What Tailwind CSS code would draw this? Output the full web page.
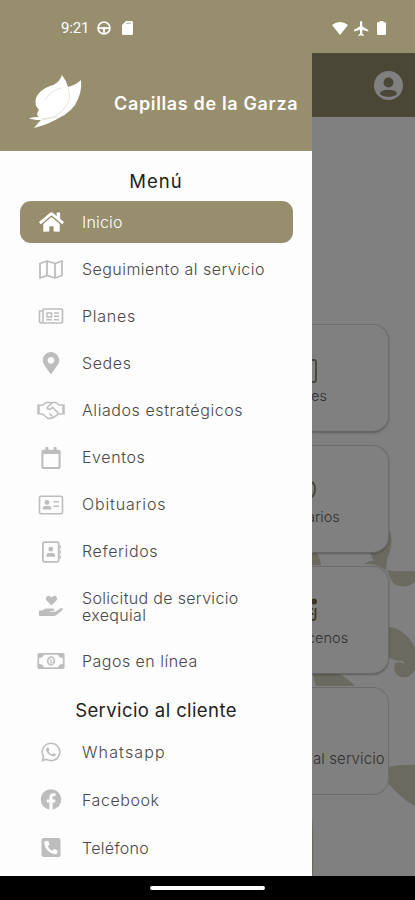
<!DOCTYPE html>
<html lang="es">
<head>
<meta charset="utf-8">
<meta name="viewport" content="width=device-width, initial-scale=1">
<title>Capillas de la Garza</title>
<script src="https://cdn.jsdelivr.net/npm/@tailwindcss/browser@4"></script>
</head>
<body class="bg-black">
<div class="flex h-[900px] w-[415px] flex-col overflow-hidden bg-black font-['Inter',sans-serif]">

  <!-- Status bar -->
  <header class="flex h-[53px] shrink-0 items-center bg-[#978e6d] pt-[3px] text-white">
    <span class="ml-[61px] w-[28px] whitespace-nowrap font-['Roboto',sans-serif] text-[15px] tracking-[-0.2px]">9:21</span>
    <svg class="ml-[8px] size-[14px]" viewBox="0 0 14 14" fill="none" stroke="currentColor" stroke-width="1.8"><circle cx="7" cy="7" r="5.9"/><path d="M1 7.200H13M7 7.200V12.500" stroke-width="1.700"/><path d="M4.500 7.500L7 5.500 9.500 7.500 7 9.500z" fill="currentColor" stroke="none"/></svg>
    <svg class="ml-[11px] h-[14px] w-[11px]" viewBox="0 0 11 14" fill="currentColor"><path d="M4 0h5.500A1.500 1.500 0 0 1 11 1.500v11A1.500 1.500 0 0 1 9.500 14h-8A1.500 1.500 0 0 1 0 12.500V4z"/><path d="M4 2.300h5" stroke="#978e6d" stroke-width=".7"/></svg>
    <svg class="ml-[199px] h-[13px] w-[16px]" viewBox="0 0 16 13" fill="currentColor"><path d="M0 3Q8-3 16 3L8 13z"/></svg>
    <svg class="ml-[6px] size-[15px]" viewBox="2 2 20 20" fill="currentColor"><path d="M21 16v-2l-8-5V3.500a1.500 1.500 0 0 0-3 0V9l-8 5v2l8-2.500V19l-2 1.500V22l3.500-1 3.500 1v-1.500L13 19v-5.500z"/></svg>
    <svg class="ml-[8px] h-[14px] w-[9px]" viewBox="0 0 9 14" fill="currentColor"><path d="M2.500 0h4v1.200H8a1 1 0 0 1 1 1V13a1 1 0 0 1-1 1H1a1 1 0 0 1-1-1V2.200a1 1 0 0 1 1-1h1.500z"/></svg>
  </header>

  <div class="flex h-[823px] shrink-0">
    <!-- Drawer -->
    <aside class="flex w-[312px] shrink-0 flex-col bg-[#fdfdfd]">
      <div class="flex h-[98px] shrink-0 items-center bg-[#978e6d] text-white">
        <svg class="ml-[28px] h-[54px] w-[54px]" viewBox="0 0 54 54"><path d="M34 0Q31 9 22 11Q11 15 8 23Q6 30 11 35Q7 40 11 42Q6 42 1 43Q4 45 13 45Q9 49 6 53Q21 49 29 44Q46 36 50 24Q54 15 53 5Q48 10 40 12Q38 5 34 0Z" fill="#fff"/><path d="M33 13Q22 16 17 25M40 13Q45 23 36 34Q32 39 23 43L14 45M30 42L13 44" fill="none" stroke="#ddd9cc" stroke-width=".7"/></svg>
        <h1 class="ml-[32px] whitespace-nowrap pt-[3px] text-[18px] font-semibold tracking-[0.65px]">Capillas de la Garza</h1>
      </div>

      <nav class="flex flex-col text-[16px] font-light leading-[17px] text-[#484848]">
        <h2 class="flex h-[50px] items-center justify-center pt-[10px] text-[18.500px] font-normal tracking-[1px] text-[#222]">Menú</h2>

        <a class="mr-[19px] ml-[20px] mb-[2.500px] flex h-[42px] items-center rounded-[11px] bg-[#978e6d] text-white">
          <svg class="ml-[19px] h-[22px] w-[25px]" viewBox="0 0 576 512" fill="currentColor"><path d="M280.370 148.260L96 300.110V464a16 16 0 0 0 16 16l112.060-.29a16 16 0 0 0 15.920-16V368a16 16 0 0 1 16-16h64a16 16 0 0 1 16 16v95.640a16 16 0 0 0 16 16.050L464 480a16 16 0 0 0 16-16V300L295.670 148.260a12.190 12.190 0 0 0-15.300 0zM571.600 251.470L488 182.560V44.050a12 12 0 0 0-12-12h-56a12 12 0 0 0-12 12v72.610L318.470 43a48 48 0 0 0-61 0L4.340 251.470a12 12 0 0 0-1.600 16.900l25.500 31A12 12 0 0 0 45.150 301l235.220-193.740a12.190 12.190 0 0 1 15.300 0L530.900 301a12 12 0 0 0 16.900-1.600l25.500-31a12 12 0 0 0-1.700-16.930z"/></svg>
          <span class="ml-[18px] tracking-[0.2px]">Inicio</span>
        </a>

        <a class="flex h-[47.100px] items-center pl-[38px]">
          <svg class="h-[21px] w-[26px] text-[#bdbdbd]" viewBox="0 0 26 21" fill="none" stroke="currentColor" stroke-width="1.800" stroke-linejoin="round"><path d="M2 4.500L9 2l8 2.500L24 2v14.500L17 19l-8-2.500L2 19zM9 2v14.500M17 4.500V19"/></svg>
          <span class="ml-[18px] tracking-[0.45px]">Seguimiento al servicio</span>
        </a>
        <a class="flex h-[47.100px] items-center pl-[38px]">
          <svg class="h-[18px] w-[26px] text-[#bdbdbd]" viewBox="0 0 26 18" fill="none" stroke="currentColor" stroke-width="1.600"><path d="M5 2h18.500a1 1 0 0 1 1 1v12a1 1 0 0 1-1 1H3.500a2 2 0 0 1-2-2V4H5M5 2v12a2 2 0 0 1-2 2"/><path d="M9 6h4.500v4H9zM16 6h5M16 9.300h5M8.200 12.700h5.800M16 12.700h5" stroke-width="1.500"/></svg>
          <span class="ml-[18px] tracking-[0.75px]">Planes</span>
        </a>
        <a class="flex h-[47.100px] items-center pl-[38px]">
          <svg class="h-[22px] w-[26px] text-[#bdbdbd]" viewBox="-114 0 612 512" fill="currentColor"><path d="M172.270 501.670C26.970 291.030 0 269.410 0 192 0 85.960 85.960 0 192 0s192 85.960 192 192c0 77.410-26.970 99.030-172.270 309.670-9.530 13.770-29.930 13.770-39.460 0zM192 272c44.180 0 80-35.820 80-80s-35.820-80-80-80-80 35.820-80 80 35.820 80 80 80z"/></svg>
          <span class="ml-[18px] tracking-[0.6px]">Sedes</span>
        </a>
        <a class="flex h-[47.400px] items-center pl-[37px]">
          <svg class="h-[19px] w-[28px] text-[#bdbdbd]" viewBox="0 0 28 19" fill="none" stroke="currentColor" stroke-width="1.600" stroke-linejoin="round" stroke-linecap="round"><path d="M1.500 3.500v10M26.500 3.500v10" stroke-width="2.500" stroke-linecap="butt"/><path d="M3 4h3l3-2.500h4l1.500 1L16 1.500h3L22 4h3M3 13h2.500l5 4q1.500 1 3 0 1.500.5 2.500-.8 1.500.2 2.200-1.200 1.800 0 2.300-2H25M14.500 2.500L10.500 6q-.5 2 1.500 2.500 1.500 0 3.500-2.200l5.500 5.500M13 13l2 2"/></svg>
          <span class="ml-[17px] pt-px tracking-[0.57px]">Aliados estratégicos</span>
        </a>
        <a class="flex h-[47.100px] items-center pl-[38px]">
          <svg class="h-[22px] w-[26px] text-[#bdbdbd]" viewBox="-78 0 604 512" fill="currentColor"><path d="M400 64h-48V12a12 12 0 0 0-12-12h-40a12 12 0 0 0-12 12v52H160V12a12 12 0 0 0-12-12h-40a12 12 0 0 0-12 12v52H48a48 48 0 0 0-48 48v352a48 48 0 0 0 48 48h352a48 48 0 0 0 48-48V112a48 48 0 0 0-48-48zm-6 400H54a6 6 0 0 1-6-6V160h352v298a6 6 0 0 1-6 6z"/></svg>
          <span class="ml-[18px] tracking-[0.600px]">Eventos</span>
        </a>
        <a class="flex h-[47.100px] items-center pl-[38px]">
          <svg class="h-[20px] w-[26px] text-[#bdbdbd]" viewBox="0 0 26 20" fill="none" stroke="currentColor" stroke-width="1.600"><rect x="1.500" y="1.200" width="23" height="17.600" rx="1.500"/><circle cx="9" cy="7.500" r="2.400" fill="currentColor" stroke="none"/><path d="M4.800 14.500v-1.200q0-2.300 2.400-2.300h3.600q2.400 0 2.400 2.300v1.200z" fill="currentColor" stroke="none"/><path d="M15.500 6.800h5.500M15.500 11.200h5.500" stroke-width="1.400"/></svg>
          <span class="ml-[18px] tracking-[0.850px]">Obituarios</span>
        </a>
        <a class="flex h-[47.100px] items-center pl-[38px]">
          <svg class="h-[22px] w-[26px] text-[#bdbdbd]" viewBox="0 0 26 22" fill="none" stroke="currentColor" stroke-width="1.800"><rect x="4.900" y="1.200" width="15.800" height="19.600" rx="1.500"/><path d="M22.200 4.500v3M22.200 9.500v3M22.200 14.500v3" stroke-width="1.500"/><circle cx="12.800" cy="8.200" r="2.400" fill="currentColor" stroke="none"/><path d="M8.500 15.800v-1.200q0-2.600 2.400-2.600h3.800q2.400 0 2.400 2.600v1.200z" fill="currentColor" stroke="none"/></svg>
          <span class="ml-[18px] tracking-[0.620px]">Referidos</span>
        </a>
        <a class="flex h-[61.500px] items-center pl-[38px]">
          <svg class="h-[24px] w-[26px] text-[#bdbdbd]" viewBox="0 0 26 24" fill="currentColor"><path d="M13.500 11.500L8.600 6.600q-1.600-2 .1-4 2.200-2 4.800.8 2.600-2.800 4.800-.8 1.700 2 .1 4z"/><path d="M1 16.500h3q2.500-2 4.500-2h6.500q1.500.2 1.300 1.400-.2 1-1.500 1.100H12v.8h4.500q1 0 2-.8l4-2.700q1.400-.8 2.200.1.700.9-.5 1.900l-5 4.300q-1.500 1.400-3.200 1.400H1z"/></svg>
          <span class="ml-[18px] pt-px tracking-[0.320px]">Solicitud de servicio<br>exequial</span>
        </a>
        <a class="flex h-[48px] items-center pl-[37px]">
          <svg class="h-[18px] w-[28px] text-[#bdbdbd]" viewBox="0 0 28 18" fill="none" stroke="currentColor" stroke-width="1.700"><rect x="1.300" y="1.800" width="25.400" height="14.400" rx=".8"/><path d="M2 2h5q-.5 4-5 4zM26 2h-5q.5 4 5 4zM2 16h5q-.5-4-5-4zM26 16h-5q.5-4 5-4z" fill="currentColor" stroke="none"/><ellipse cx="14" cy="9" rx="3.300" ry="4"/><path d="M13 7.700l1-.5v3.500M12.900 10.900h2.300" stroke-width="1"/></svg>
          <span class="ml-[17px] pt-px tracking-[0.480px]">Pagos en línea</span>
        </a>

        <h2 class="flex h-[42.500px] items-center justify-center pt-[9px] text-[18.500px] font-normal tracking-[0.400px] text-[#222]">Servicio al cliente</h2>

        <a class="flex h-[48.200px] items-center pl-[38px]">
          <svg class="h-[22px] w-[26px] text-[#bdbdbd]" viewBox="-78 0 604 512" fill="currentColor"><path d="M380.900 97.100C339 55.100 283.200 32 223.900 32c-122.400 0-222 99.600-222 222 0 39.100 10.200 77.300 29.600 111L0 480l117.700-30.900c32.400 17.700 68.900 27 106.100 27h.1c122.300 0 224.100-99.600 224.100-222 0-59.300-25.200-115-67.100-157zm-157 341.600c-33.200 0-65.700-8.900-94-25.700l-6.700-4-69.800 18.300L72 359.200l-4.400-7c-18.500-29.400-28.200-63.300-28.200-98.200 0-101.700 82.800-184.500 184.600-184.500 49.300 0 95.600 19.200 130.400 54.100 34.800 34.900 56.200 81.200 56.100 130.500 0 101.800-84.900 184.600-186.600 184.600zm101.200-138.200c-5.500-2.800-32.800-16.200-37.900-18-5.100-1.900-8.800-2.800-12.500 2.800-3.700 5.600-14.300 18-17.600 21.800-3.200 3.700-6.500 4.200-12 1.400-32.600-16.300-54-29.100-75.500-66-5.700-9.800 5.700-9.100 16.300-30.300 1.800-3.700.9-6.900-.5-9.700-1.400-2.800-12.500-30.100-17.100-41.200-4.500-10.800-9.100-9.300-12.500-9.500-3.200-.2-6.900-.2-10.600-.2-3.700 0-9.700 1.400-14.800 6.900-5.100 5.600-19.400 19-19.400 46.300 0 27.300 19.900 53.700 22.600 57.400 2.800 3.700 39.100 59.700 94.800 83.800 35.200 15.200 49 16.500 66.600 13.900 10.700-1.600 32.800-13.400 37.400-26.400 4.600-13 4.600-24.100 3.200-26.400-1.300-2.500-5-3.900-10.500-6.600z"/></svg>
          <span class="ml-[18px] pt-px tracking-[1.150px]">Whatsapp</span>
        </a>
        <a class="flex h-[48.200px] items-center pl-[38px]">
          <svg class="h-[21px] w-[26px] text-[#bdbdbd]" viewBox="0 0 512 512" fill="currentColor"><path d="M504 256C504 119 393 8 256 8S8 119 8 256c0 123.780 90.690 226.380 209.250 245V327.690h-63V256h63v-54.640c0-62.150 37-96.480 93.670-96.480 27.140 0 55.520 4.840 55.520 4.840v61h-31.280c-30.800 0-40.410 19.120-40.410 38.730V256h68.780l-11 71.690h-57.780V501C413.310 482.380 504 379.780 504 256z"/></svg>
          <span class="ml-[18px] pt-px tracking-[0.540px]">Facebook</span>
        </a>
        <a class="flex h-[48.200px] items-center pl-[38px]">
          <svg class="h-[19px] w-[26px] text-[#bdbdbd]" viewBox="0 32 448 448" fill="currentColor"><path d="M400 32H48A48 48 0 0 0 0 80v352a48 48 0 0 0 48 48h352a48 48 0 0 0 48-48V80a48 48 0 0 0-48-48zm-16.390 307.370l-15 65A15 15 0 0 1 354 416C194 416 64 286.290 64 126a15.700 15.700 0 0 1 11.630-14.610l65-15A18.230 18.230 0 0 1 144 96a16.270 16.270 0 0 1 13.790 9.090l30 70A17.900 17.900 0 0 1 189 181a17 17 0 0 1-5.500 11.610l-37.890 31a231.910 231.910 0 0 0 110.780 110.780l31-37.890A17 17 0 0 1 299 291a17.850 17.850 0 0 1 5.910 1.210l70 30A16.250 16.250 0 0 1 384 336a17.410 17.410 0 0 1-.39 3.370z"/></svg>
          <span class="ml-[18px] pt-px tracking-[0.300px]">Teléfono</span>
        </a>
      </nav>
    </aside>

    <!-- Dimmed home screen beside the drawer -->
    <main class="relative flex w-[103px] flex-col overflow-hidden bg-[#808080] text-[15px] font-light leading-[18px] text-[#303030]">
      <div class="flex h-[64px] shrink-0 items-center justify-end bg-[#4b4736] pr-[12px]">
        <svg class="size-[29px] text-[#808080]" viewBox="0 0 29 29"><circle cx="14.500" cy="14.500" r="14.500" fill="currentColor"/><circle cx="14.500" cy="11.500" r="5" fill="#4b4736"/><ellipse cx="14.500" cy="22.300" rx="8.500" ry="3.600" fill="#4b4736"/></svg>
      </div>
      <!-- Leaf ornament behind the cards -->
      <svg class="absolute top-0 left-0 h-[823px] w-[103px]" viewBox="0 0 103 823" fill="#6a6a60"><path d="M0 498Q7 498 9 512H0zM78 478Q82 492 75 506L74 517Q85 519 103 518V529Q94 536 84 532Q78 528 76 519Q67 510 52 511Q59 507 62 508Q59 504 58 498Q70 494 78 478zM77 574Q94 576 103 595V617Q97 626 89 624Q80 621 83 610Q88 608 93 611L91 608Q82 608 76 604zM0 618H14Q32 620 43 633H4zM76 714Q90 711 103 712V753Q88 745 76 730zM0 764Q2 780 1 823H0z"/></svg>
      <div class="relative mt-[207px] flex w-[77px] flex-col gap-[13px]">
        <section class="flex h-[108px] flex-col rounded-r-[16px] border border-l-0 border-[#6d6d6d] border-b-[#666] bg-[#808080] shadow-[0_1px_2px_#00000045]">
          <svg class="mt-[34px] h-[25px] w-[5px]" viewBox="0 0 5 25" fill="none" stroke="#45433a" stroke-width="1.800"><path d="M0 1h2q2 0 2 2v18q0 2-2 2H0"/></svg>
          <span class="mt-[3px] ml-[-1px] text-[14.500px]">es</span>
        </section>
        <section class="flex h-[108px] flex-col rounded-r-[16px] border border-l-0 border-[#6d6d6d] border-b-[#666] bg-[#808080] shadow-[0_1px_2px_#00000045]">
          <svg class="mt-[34px] h-[20px] w-[5px]" viewBox="0 0 5 20" fill="none" stroke="#45433a" stroke-width="1.800"><path d="M0 2Q3 4 3 9T0 17"/></svg>
          <span class="mt-[8px] ml-[-5px] text-[14.500px]">arios</span>
        </section>
        <section class="flex h-[108px] flex-col rounded-r-[16px] border border-l-0 border-[#6d6d6d] border-b-[#666] bg-[#808080] shadow-[0_1px_2px_#00000045]">
          <svg class="mt-[30px] h-[25px] w-[6px]" viewBox="0 0 6 25" fill="none" stroke="#39361f" stroke-width="1.800"><circle cx="2" cy="4.500" r="3" fill="#39361f" stroke="none"/><path d="M0 12h1M3.500 11v10q0 2-3.500 2M0 17h1.500"/></svg>
          <span class="mt-[7px] ml-[-5px] text-[14.500px]">cenos</span>
        </section>
        <section class="flex h-[108px] flex-col rounded-r-[16px] border border-l-0 border-[#6d6d6d] bg-[#808080]">
          <span class="mt-[62px] ml-[1px] whitespace-nowrap tracking-[0.1px]">al servicio</span>
        </section>
      </div>
    </main>
  </div>

  <!-- System navigation bar -->
  <footer class="flex h-[24px] shrink-0 items-center justify-center bg-black">
    <div class="h-[4px] w-[115px] rounded-full bg-white"></div>
  </footer>
</div>
</body>
</html>
